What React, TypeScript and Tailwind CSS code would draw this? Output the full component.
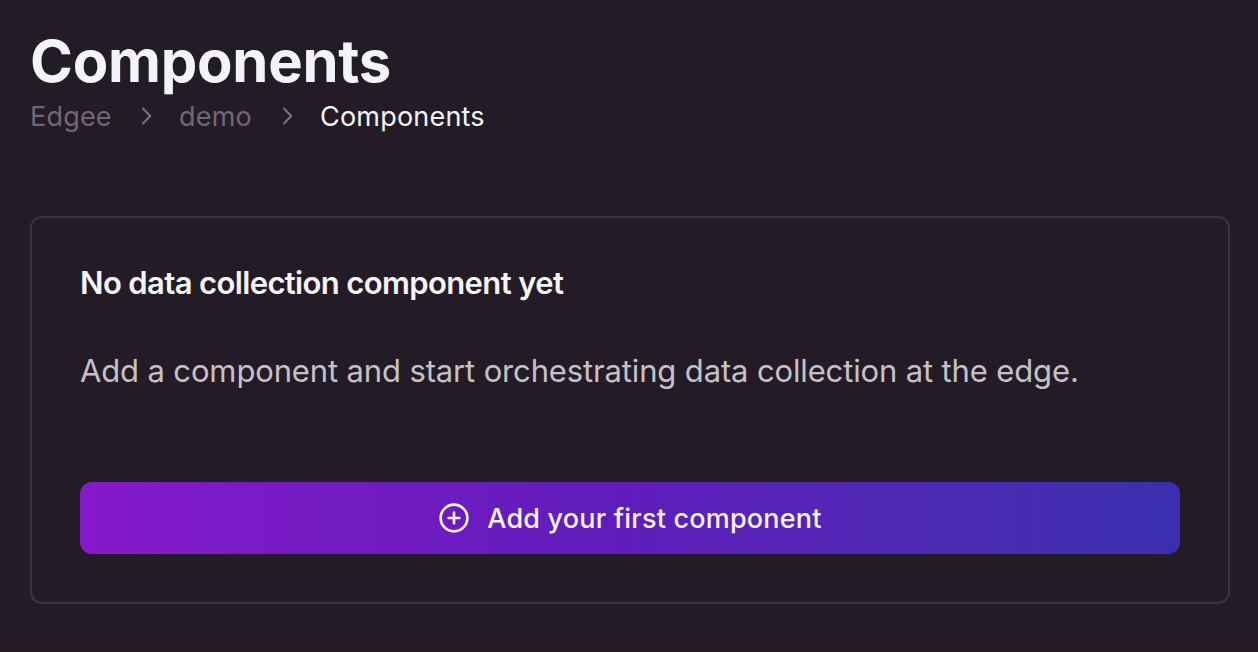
import React from "react";
import { CirclePlus } from "lucide-react";

function Chevron() {
  return (
    <svg className="h-7 w-7 shrink-0 text-[#7d7482]" viewBox="0 0 15 15" fill="currentColor" stroke="currentColor" strokeWidth="0.15">
      <path
        fillRule="evenodd"
        clipRule="evenodd"
        d="M6.1584 3.13508C6.35985 2.94621 6.67627 2.95642 6.86514 3.15788L10.6151 7.15788C10.7954 7.3502 10.7954 7.64949 10.6151 7.84182L6.86514 11.8418C6.67627 12.0433 6.35985 12.0535 6.1584 11.8646C5.95694 11.6757 5.94673 11.3593 6.1356 11.1579L9.565 7.49985L6.1356 3.84182C5.94673 3.64036 5.95694 3.32394 6.1584 3.13508Z"
      />
    </svg>
  );
}

export default function App() {
  return (
    <main className="h-[652px] w-full overflow-hidden border-b-2 border-[#251a20] bg-[#231c26] px-[30px] pt-[32px] font-['Inter',sans-serif] text-[#f3f4f6]">
      <h1 className="h-[60px] text-[58px] leading-[59px] font-bold tracking-[-0.25px] whitespace-nowrap">Components</h1>
      <nav className="mt-[4px] flex h-[40px] items-center gap-5 text-[27px] leading-[40px] tracking-[0.2px] whitespace-nowrap text-[#716875]">
        <span className="w-[81px] pt-0.5">Edgee</span>
        <Chevron />
        <span className="w-[73px] pt-0.5">demo</span>
        <Chevron />
        <span className="pt-0.5 text-[#f3f4f6]">Components</span>
      </nav>
      <section className="mt-[80px] h-[388px] w-[1200px] rounded-xl border-2 border-[#3b343e] px-[48px] pt-[47px]">
        <h2 className="text-[31px] leading-[36px] font-semibold tracking-[-0.63px] whitespace-nowrap">No data collection component yet</h2>
        <p className="mt-[48px] text-[31px] leading-[44px] tracking-[-0.14px] whitespace-nowrap text-[#c4c2c6]">Add a component and start orchestrating data collection at the edge.</p>
        <button className="mt-[89px] flex h-[72px] w-full items-center justify-center gap-[17px] rounded-xl bg-linear-to-r from-[#8518cb] via-[#5f1cbb] to-[#3a2fae] text-[27px] font-medium tracking-[0.2px] whitespace-nowrap">
          <CirclePlus size={32} strokeWidth={2} />
          <span className="pt-0.5">Add your first component</span>
        </button>
      </section>
    </main>
  );
}
